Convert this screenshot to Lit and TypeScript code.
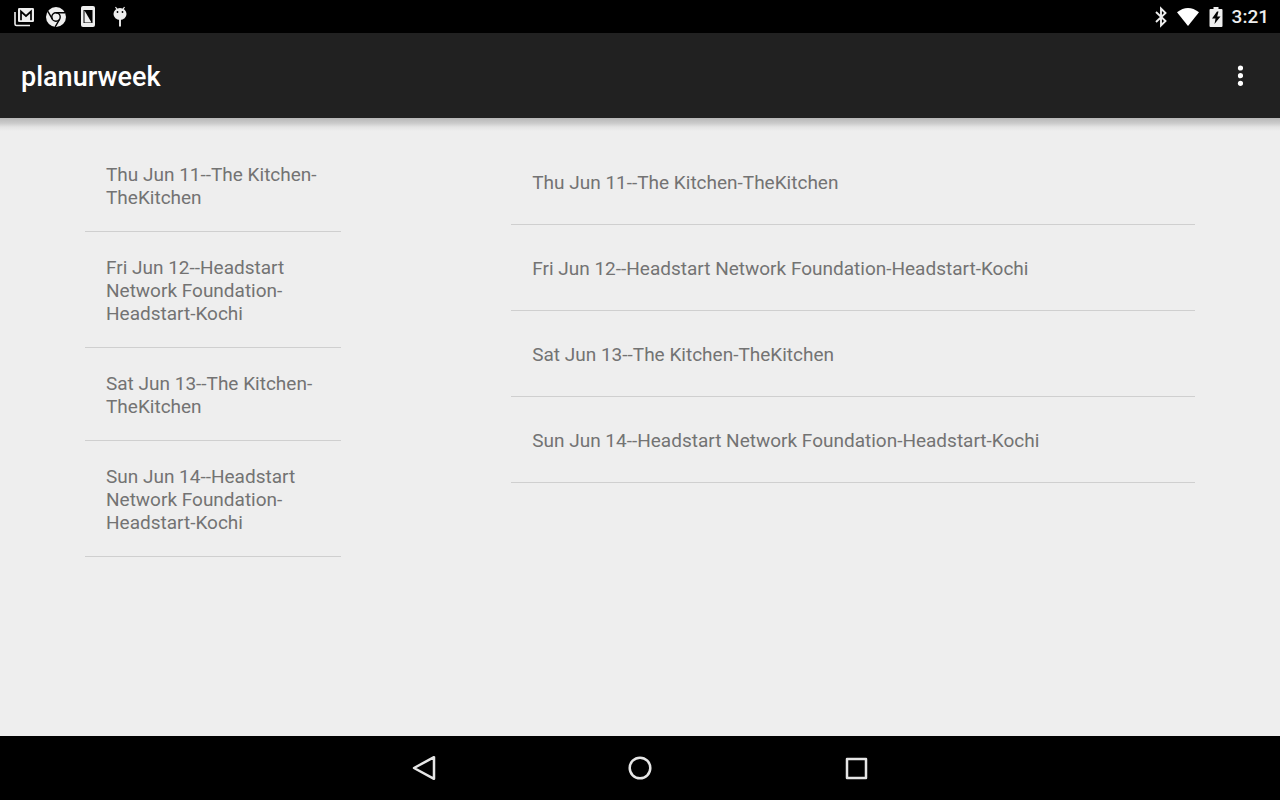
import { LitElement, html, css, svg } from "lit";
import { customElement, property } from "lit/decorators.js";

const EVENTS = [
  "Thu Jun 11--The Kitchen-TheKitchen",
  "Fri Jun 12--Headstart Network Foundation-Headstart-Kochi",
  "Sat Jun 13--The Kitchen-TheKitchen",
  "Sun Jun 14--Headstart Network Foundation-Headstart-Kochi",
];

const icon = (label: string, w: number, h: number, body: unknown) => html`
  <svg role="img" aria-label=${label} width=${w} height=${h} viewBox="0 0 ${w} ${h}">${body}</svg>
`;

const mail = icon("New mail", 20, 22, svg`
  <path d="M1 6v12q0 1.500 1.500 1.500H16" fill="none" stroke="#eee" stroke-width="1.600"/>
  <rect x="4" y="2" width="16" height="14" rx="1.200" fill="#eee"/>
  <path d="M7 14.200V5.500L12 10l5-4.500v8.700" fill="none" stroke="#000" stroke-width="1.700"/>`);

const chrome = icon("Chrome", 20, 22, svg`
  <circle cx="10" cy="11" r="10" fill="#eee"/>
  <circle cx="10" cy="11" r="4.200" fill="#eee" stroke="#000" stroke-width="1.400"/>
  <path d="M10 6.800H19M6.360 13.100L1.900 5.400M13.640 13.100L9.200 20.800" stroke="#000" stroke-width="1.400"/>`);

const phone = icon("Screen", 20, 22, svg`
  <rect x="3" width="14" height="21" rx="2" fill="#eee"/>
  <rect x="5.500" y="4" width="9" height="13" fill="#000"/>
  <path d="M6.500 4.500v12h7z" fill="#eee"/>`);

const bug = icon("Debugging", 20, 22, svg`
  <path d="M5.500 1l2 3M14.500 1l-2 3" stroke="#eee" stroke-width="1.200"/>
  <ellipse cx="10" cy="8" rx="6.500" ry="6" fill="#eee"/>
  <circle cx="7.500" cy="6" r=".9"/><circle cx="12.500" cy="6" r=".9"/>
  <path d="M10 13v7.500" stroke="#eee" stroke-width="1.900"/>`);

const bluetooth = icon("Bluetooth", 12, 22, svg`
  <path d="M1 6l9.500 9L6 19.500v-17L10.500 7 1 16" fill="none" stroke="#eee" stroke-width="1.900"/>`);

const wifi = icon("Wi-Fi", 24, 22, svg`<path d="M1 6.300Q12-2.300 23 6.300L12 20z" fill="#fff"/>`);

const battery = icon("Battery charging", 14, 22, svg`
  <path d="M4.500 1h5v2H12.500q1 0 1 1v16q0 1-1 1h-11q-1 0-1-1V4q0-1 1-1h3z" fill="#eee"/>
  <path d="M8 5.500L3 12.500h3.500L5.500 18l6-7.500H8.200l1.300-5z" fill="#000"/>`);

@customElement("status-bar")
class StatusBar extends LitElement {
  static styles = css`
    :host {
      display: flex;
      align-items: center;
      justify-content: space-between;
      height: 33px;
      padding: 0 11px 0 14px;
      background: #000;
      color: #eee;
      font-size: 19px;
      font-weight: 500;
    }
    .group { display: flex; align-items: center; }
    .notices { gap: 12px; }
    .system { gap: 9px; }
    svg { display: block; }
  `;
  render() {
    return html`
      <div class="group notices">${mail}${chrome}${phone}${bug}</div>
      <div class="group system">${bluetooth}${wifi}${battery}<time>3:21</time></div>
    `;
  }
}

@customElement("event-list")
class EventList extends LitElement {
  @property({ attribute: false }) items: string[] = [];
  static styles = css`
    :host { display: block; padding: 21px 85px; }
    ul { margin: 0; padding: 0; list-style: none; }
    li {
      display: flex;
      align-items: center;
      box-sizing: border-box;
      min-height: 86px;
      padding: 24px 21px 22px;
      border-bottom: 1px solid #cfcfcf;
      color: #737373;
      font-size: 19px;
      line-height: 23px;
    }
  `;
  render() {
    return html`<ul>${this.items.map((t) => html`<li>${t}</li>`)}</ul>`;
  }
}

@customElement("app-root")
class AppRoot extends LitElement {
  static styles = css`
    :host {
      display: flex;
      flex-direction: column;
      min-height: 100vh;
      background: #eee;
      font-family: Roboto, "Noto Sans", sans-serif;
    }
    button {
      display: grid;
      place-items: center;
      padding: 0;
      border: 0;
      background: none;
      cursor: pointer;
    }
    .bar {
      display: flex;
      align-items: center;
      justify-content: space-between;
      height: 85px;
      padding: 0 16px 0 21px;
      background: #212121;
    }
    h1 { margin: 0; padding-top: 2px; color: #fff; font-size: 27px; font-weight: 500; line-height: 32px; }
    .more { width: 48px; height: 64px; }
    .panes {
      flex: 1;
      display: grid;
      grid-template-columns: 33.3% minmax(0, 1fr);
      align-items: start;
      background: linear-gradient(#b8b8b8, #cacaca 5px, #e4e4e4 9px, #eee 13px);
    }
    .nav {
      display: flex;
      justify-content: center;
      gap: 152px;
      height: 64px;
      background: #000;
    }
    .nav button { width: 64px; height: 64px; }
  `;
  render() {
    return html`
      <status-bar></status-bar>
      <header class="bar">
        <h1>planurweek</h1>
        <button class="more" aria-label="More options">
          <svg width="6" height="22" viewBox="0 0 6 22" fill="#fff">
            <circle cx="3.500" cy="3" r="2.600"/><circle cx="3.500" cy="10.700" r="2.600"/><circle cx="3.500" cy="18.300" r="2.600"/>
          </svg>
        </button>
      </header>
      <main class="panes">
        <event-list .items=${EVENTS}></event-list>
        <event-list .items=${EVENTS}></event-list>
      </main>
      <nav class="nav">
        <button aria-label="Back">
          <svg width="26" height="26" viewBox="0 0 26 26" fill="none" stroke="#e6e6e6" stroke-width="2.500" stroke-linejoin="round"><path d="M23 2.200v21.600L3 13z"/></svg>
        </button>
        <button aria-label="Home">
          <svg width="26" height="26" viewBox="0 0 26 26" fill="none" stroke="#e6e6e6" stroke-width="2.500"><circle cx="13" cy="13" r="10.300"/></svg>
        </button>
        <button aria-label="Recent apps">
          <svg width="26" height="26" viewBox="0 0 26 26" fill="none" stroke="#e6e6e6" stroke-width="2.500" stroke-linejoin="round"><rect x="4" y="4" width="19" height="19"/></svg>
        </button>
      </nav>
    `;
  }
}
